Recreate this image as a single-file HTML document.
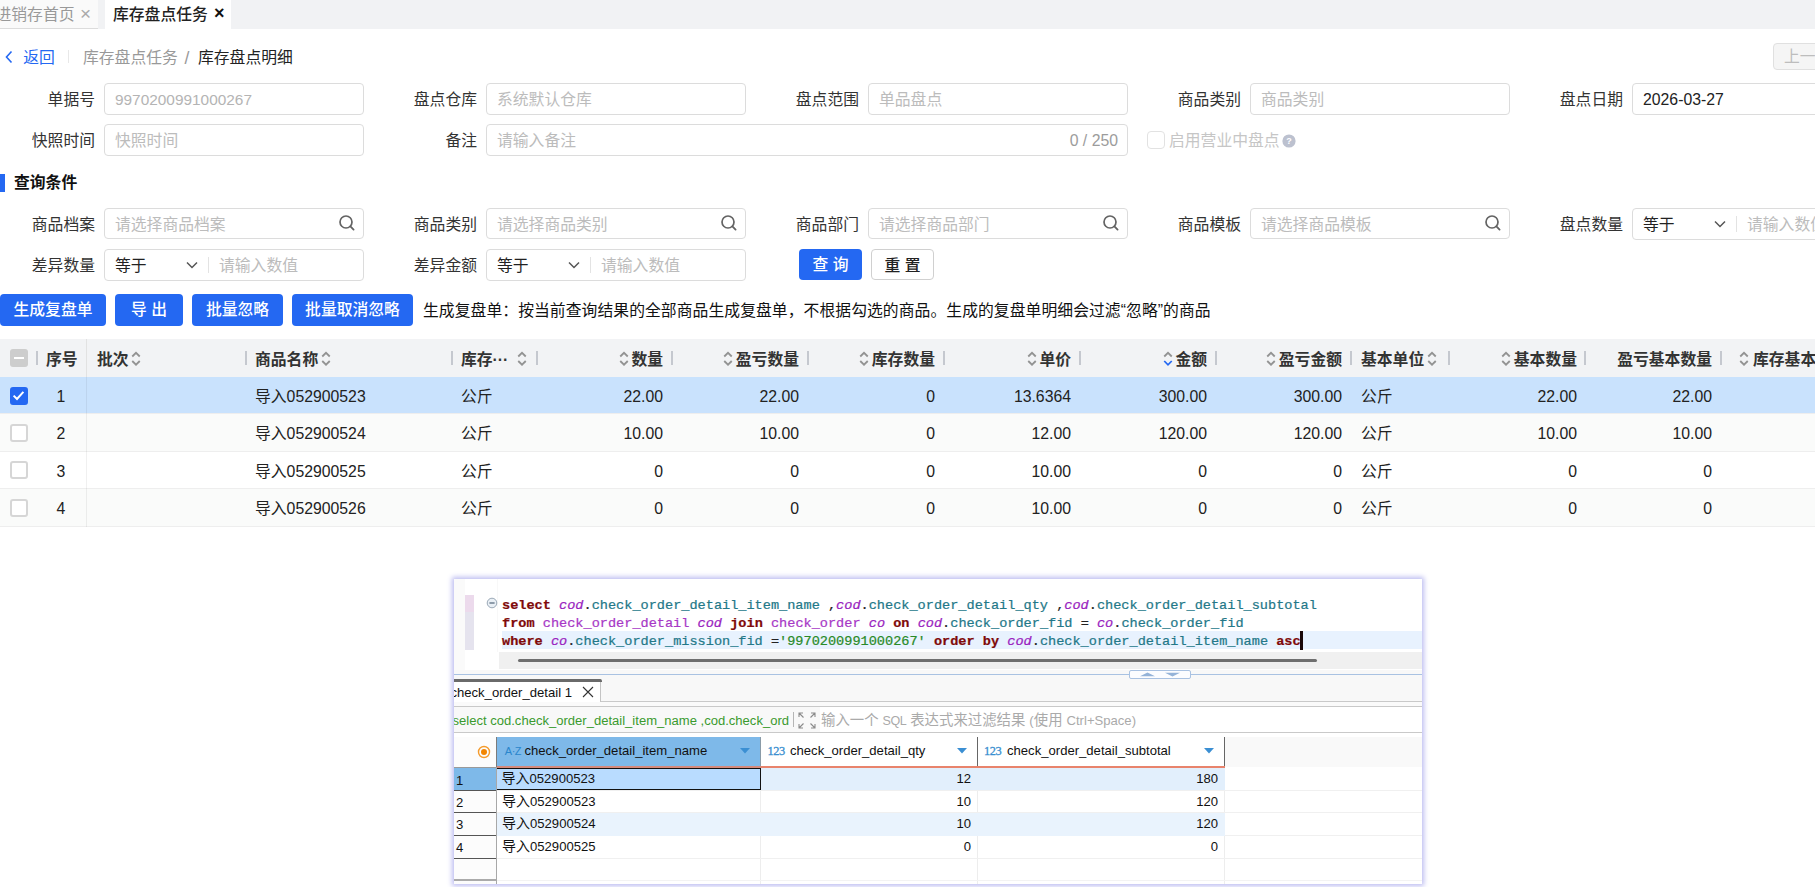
<!DOCTYPE html>
<html lang="zh-CN">
<head>
<meta charset="utf-8">
<title>库存盘点明细</title>
<style>
html,body{margin:0;padding:0;}
body{width:1815px;height:887px;overflow:hidden;background:#fff;position:relative;
  font-family:"Liberation Sans","Noto Sans CJK SC",sans-serif;font-size:15.8px;color:#333;}
*{box-sizing:border-box;}
.abs{position:absolute;}
/* ---------- tab bar ---------- */
#tabbar{position:absolute;left:0;top:0;width:1815px;height:29px;background:#f1f2f4;}
#tab1{position:absolute;left:0;top:0;width:98px;height:29px;background:#fafafa;border-bottom:1px solid #dcdcdc;color:#999;line-height:29px;white-space:nowrap;}
#tab2{position:absolute;left:105px;top:0;width:126px;height:29px;background:#fff;color:#222;line-height:29px;white-space:nowrap;font-weight:500;}
/* ---------- breadcrumb ---------- */
.bc{position:absolute;top:44.5px;height:26px;line-height:26px;white-space:nowrap;}
/* ---------- form ---------- */
.lbl{position:absolute;height:31px;line-height:34.6px;text-align:right;white-space:nowrap;color:#333;width:95px;}
.inp{position:absolute;height:31.5px;width:260px;border:1px solid #dcdcdc;border-radius:4px;background:#fff;line-height:32.6px;padding-left:10px;color:#bcbcbc;white-space:nowrap;overflow:hidden;}
.inp.val{color:#222;}
.inp.dis{color:#b4b4b4;font-size:15.4px;}
.num{font-size:15.8px;}
.sicon{position:absolute;right:7px;top:5px;width:18px;height:18px;}
.chev{position:absolute;width:12px;height:8px;}
.vdiv{position:absolute;width:1px;background:#e3e3e3;}
.btn{position:absolute;top:294px;height:32px;line-height:32px;border-radius:4px;background:#2468f2;color:#fff;text-align:center;white-space:nowrap;font-weight:500;}
/* ---------- table ---------- */
#thead{position:absolute;left:0;top:339px;width:1815px;height:38px;background:#f2f3f5;}
.th{position:absolute;top:0;height:38px;line-height:41.4px;font-weight:bold;color:#333;white-space:nowrap;}
.th.r{text-align:right;}
.tick{position:absolute;top:12px;width:2px;height:14px;background:#c5c8cf;margin-left:-0.5px;}
.sort{position:absolute;top:10.6px;width:10px;height:17.5px;margin-left:-1.7px;}
.row{position:absolute;left:0;width:1815px;height:37.4px;border-bottom:1px solid #eeeeee;}
.td{position:absolute;top:0;height:37px;line-height:40px;color:#222;white-space:nowrap;}
.td.r{text-align:right;}
.cb{position:absolute;left:9.5px;width:18px;height:18px;border:2px solid #d6d6d6;border-radius:3px;background:#fff;}

/* ---------- DBeaver panel ---------- */
#dbwrap{position:absolute;left:454px;top:579px;width:968px;height:305px;box-shadow:0 0 5px 2px #bdbdf1;background:#fff;}
#db{position:absolute;left:0;top:0;width:968px;height:305px;overflow:hidden;background:#fff;font-family:"Liberation Sans","Noto Sans CJK SC",sans-serif;font-size:13.1px;color:#111;}
.code{position:absolute;left:48px;height:18px;line-height:18px;white-space:pre;font-family:"Liberation Mono",monospace;font-size:13.58px;color:#222;-webkit-text-stroke:0.22px currentColor;}
.kw{font-weight:bold;color:#7f0a0a;}
.al{font-style:italic;color:#9a1fc0;}
.tb{color:#a738c6;}
.cl{color:#237888;}
.st{color:#288a28;}
.hl{position:absolute;height:1px;background:#c9c9c9;}
.gh{position:absolute;top:158px;height:29.5px;line-height:27.8px;white-space:nowrap;}
.gr{position:absolute;left:0;width:968px;height:22.56px;}
.gc{position:absolute;top:0;height:22.56px;line-height:21.2px;white-space:nowrap;}
.rh{position:absolute;left:0;width:42px;height:22.56px;line-height:23.6px;padding-left:2px;border-bottom:1px solid #555;background:#fcfcfc;}
.lt{font-size:13.1px;}
.cj{font-size:14px;}
.ico123{-webkit-text-stroke:0.3px #3a8fd0;color:#3a8fd0;font-size:12.4px;letter-spacing:-0.4px;font-family:"Liberation Serif",serif;line-height:28px !important;}
</style>
</head>
<body>
<!-- ================= TAB BAR ================= -->
<div id="tabbar">
  <div id="tab1"><span class="abs" style="left:-4.5px;top:0">进销存首页</span><span class="abs" style="left:80px;top:-1px;font-size:19px;color:#aaa">×</span></div>
  <div id="tab2"><span class="abs" style="left:8px;top:0">库存盘点任务</span><span class="abs" style="left:109px;top:-1px;font-size:18px;font-weight:bold;color:#111">×</span></div>
</div>

<!-- ================= BREADCRUMB ================= -->
<svg class="abs" style="left:4px;top:49px" width="10" height="16" viewBox="0 0 10 16"><path d="M7.5 2.5 L2.5 8 L7.5 13.5" fill="none" stroke="#2468f2" stroke-width="1.6"/></svg>
<div class="bc" style="left:23.2px;color:#2468f2">返回</div>
<div class="vdiv" style="left:68px;top:50px;height:13px;background:#e8e8e8"></div>
<div class="bc" style="left:83px;color:#999">库存盘点任务</div>
<div class="bc" style="left:184.5px;color:#999;font-size:17.5px">/</div>
<div class="bc" style="left:198px;color:#222">库存盘点明细</div>
<div class="abs" style="left:1773px;top:42.6px;width:60px;height:27px;border:1px solid #e0e0e0;border-radius:4px;background:#f5f5f5;color:#bdbdbd;line-height:25px;padding-left:10px;white-space:nowrap">上一条</div>

<!-- ================= FORM ROW 1 ================= -->
<div class="lbl" style="left:0;top:83px">单据号</div>
<div class="inp dis" style="left:104px;top:83px">9970200991000267</div>
<div class="lbl" style="left:382px;top:83px">盘点仓库</div>
<div class="inp" style="left:486px;top:83px">系统默认仓库</div>
<div class="lbl" style="left:764px;top:83px">盘点范围</div>
<div class="inp" style="left:868px;top:83px">单品盘点</div>
<div class="lbl" style="left:1146px;top:83px">商品类别</div>
<div class="inp" style="left:1250px;top:83px">商品类别</div>
<div class="lbl" style="left:1528px;top:83px">盘点日期</div>
<div class="inp val" style="left:1632px;top:83px">2026-03-27</div>

<!-- ================= FORM ROW 2 ================= -->
<div class="lbl" style="left:0;top:124px">快照时间</div>
<div class="inp" style="left:104px;top:124px">快照时间</div>
<div class="lbl" style="left:382px;top:124px">备注</div>
<div class="inp" style="left:486px;top:124px;width:642px">请输入备注<span class="abs" style="right:9px;top:0;color:#9c9c9c">0 / 250</span></div>
<div class="cb" style="left:1146.5px;top:131px;border:1px solid #e2e2e2;border-radius:4px"></div>
<div class="abs" style="left:1169px;top:124px;height:31px;line-height:33.6px;color:#c6c6c6;white-space:nowrap">启用营业中盘点</div>
<svg class="abs" style="left:1282px;top:133.6px" width="14" height="14" viewBox="0 0 14 14"><circle cx="7" cy="7" r="6.6" fill="#bcc1cf"/><text x="7" y="10.3" font-size="9" font-weight="bold" text-anchor="middle" fill="#fff" font-family="Liberation Sans, sans-serif">?</text></svg>

<!-- ================= SECTION TITLE ================= -->
<div class="abs" style="left:0;top:174px;width:5px;height:18px;background:#2468f2"></div>
<div class="abs" style="left:14px;top:170px;height:26px;line-height:26px;font-weight:bold;color:#111;white-space:nowrap">查询条件</div>

<!-- ================= QUERY ROW 1 ================= -->
<div class="lbl" style="left:0;top:208px">商品档案</div>
<div class="inp" style="left:104px;top:208px;height:30.8px">请选择商品档案<svg class="sicon" viewBox="0 0 18 18"><circle cx="8" cy="8" r="6" fill="none" stroke="#636363" stroke-width="1.7"/><path d="M12.4 12.4 L15.6 15.6" stroke="#636363" stroke-width="1.8" stroke-linecap="round"/></svg></div>
<div class="lbl" style="left:382px;top:208px">商品类别</div>
<div class="inp" style="left:486px;top:208px;height:30.8px">请选择商品类别<svg class="sicon" viewBox="0 0 18 18"><circle cx="8" cy="8" r="6" fill="none" stroke="#636363" stroke-width="1.7"/><path d="M12.4 12.4 L15.6 15.6" stroke="#636363" stroke-width="1.8" stroke-linecap="round"/></svg></div>
<div class="lbl" style="left:764px;top:208px">商品部门</div>
<div class="inp" style="left:868px;top:208px;height:30.8px">请选择商品部门<svg class="sicon" viewBox="0 0 18 18"><circle cx="8" cy="8" r="6" fill="none" stroke="#636363" stroke-width="1.7"/><path d="M12.4 12.4 L15.6 15.6" stroke="#636363" stroke-width="1.8" stroke-linecap="round"/></svg></div>
<div class="lbl" style="left:1146px;top:208px">商品模板</div>
<div class="inp" style="left:1250px;top:208px;height:30.8px">请选择商品模板<svg class="sicon" viewBox="0 0 18 18"><circle cx="8" cy="8" r="6" fill="none" stroke="#636363" stroke-width="1.7"/><path d="M12.4 12.4 L15.6 15.6" stroke="#636363" stroke-width="1.8" stroke-linecap="round"/></svg></div>
<div class="lbl" style="left:1528px;top:208px">盘点数量</div>
<div class="inp val" style="left:1632px;top:208px">等于<svg class="chev" style="left:81px;top:11px" viewBox="0 0 12 8"><path d="M1 1.5 L6 6.5 L11 1.5" fill="none" stroke="#555" stroke-width="1.5"/></svg><span class="vdiv" style="left:103px;top:7px;height:16px"></span><span class="abs" style="left:114px;top:0;color:#bcbcbc">请输入数值</span></div>

<!-- ================= QUERY ROW 2 ================= -->
<div class="lbl" style="left:0;top:249px">差异数量</div>
<div class="inp val" style="left:104px;top:249px;height:31.6px">等于<svg class="chev" style="left:81px;top:11px" viewBox="0 0 12 8"><path d="M1 1.5 L6 6.5 L11 1.5" fill="none" stroke="#555" stroke-width="1.5"/></svg><span class="vdiv" style="left:103px;top:7px;height:16px"></span><span class="abs" style="left:114px;top:0;color:#bcbcbc">请输入数值</span></div>
<div class="lbl" style="left:382px;top:249px">差异金额</div>
<div class="inp val" style="left:486px;top:249px;height:31.6px">等于<svg class="chev" style="left:81px;top:11px" viewBox="0 0 12 8"><path d="M1 1.5 L6 6.5 L11 1.5" fill="none" stroke="#555" stroke-width="1.5"/></svg><span class="vdiv" style="left:103px;top:7px;height:16px"></span><span class="abs" style="left:114px;top:0;color:#bcbcbc">请输入数值</span></div>
<div class="btn" style="left:799px;top:249px;width:63px;height:31px;line-height:32px">查 询</div>
<div class="abs" style="left:871px;top:249px;width:63px;height:31px;line-height:31px;border:1px solid #d0d0d0;border-radius:4px;text-align:center;color:#222;font-weight:500;white-space:nowrap;background:#fff">重 置</div>

<!-- ================= ACTION BUTTONS ================= -->
<div class="btn" style="left:0;width:106px">生成复盘单</div>
<div class="btn" style="left:115px;width:68px">导 出</div>
<div class="btn" style="left:192px;width:91px">批量忽略</div>
<div class="btn" style="left:292px;width:121px">批量取消忽略</div>
<div class="abs" style="left:423px;top:294px;height:32px;line-height:33px;color:#111;white-space:nowrap;letter-spacing:0.06px">生成复盘单：按当前查询结果的全部商品生成复盘单，不根据勾选的商品。生成的复盘单明细会过滤“忽略”的商品</div>

<!-- ================= TABLE ================= -->
<div id="thead">
<div class="abs" style="left:10px;top:10px;width:18px;height:18px;border-radius:3px;background:#cdcdcd"><div class="abs" style="left:4px;top:8px;width:10px;height:2px;background:#fff"></div></div>
<div class="tick" style="left:36px"></div>
<div class="th" style="left:46px">序号</div>
<div class="abs" style="left:86px;top:0;width:1px;height:187px;background:#e2e2e2"></div>
<div class="th" style="left:97px">批次</div><svg class="sort" style="left:132.5px" viewBox="0 0 8 14"><path d="M1 5.2 L4 2.2 L7 5.2 M1 8.8 L4 11.8 L7 8.8" fill="none" stroke="#939393" stroke-width="1.45"/></svg>
<div class="tick" style="left:245px"></div>
<div class="th" style="left:255px">商品名称</div><svg class="sort" style="left:322.5px" viewBox="0 0 8 14"><path d="M1 5.2 L4 2.2 L7 5.2 M1 8.8 L4 11.8 L7 8.8" fill="none" stroke="#939393" stroke-width="1.45"/></svg>
<div class="tick" style="left:451px"></div>
<div class="th" style="left:461px">库存···</div><svg class="sort" style="left:518.5px" viewBox="0 0 8 14"><path d="M1 5.2 L4 2.2 L7 5.2 M1 8.8 L4 11.8 L7 8.8" fill="none" stroke="#939393" stroke-width="1.45"/></svg>
<div class="tick" style="left:536px"></div>
<div class="th r" style="left:533px;width:130px">数量</div><svg class="sort" style="left:620.6px" viewBox="0 0 8 14"><path d="M1 5.2 L4 2.2 L7 5.2 M1 8.8 L4 11.8 L7 8.8" fill="none" stroke="#939393" stroke-width="1.45"/></svg>
<div class="tick" style="left:671px"></div>
<div class="th r" style="left:669px;width:130px">盈亏数量</div><svg class="sort" style="left:725.0px" viewBox="0 0 8 14"><path d="M1 5.2 L4 2.2 L7 5.2 M1 8.8 L4 11.8 L7 8.8" fill="none" stroke="#939393" stroke-width="1.45"/></svg>
<div class="tick" style="left:807px"></div>
<div class="th r" style="left:805px;width:130px">库存数量</div><svg class="sort" style="left:861.0px" viewBox="0 0 8 14"><path d="M1 5.2 L4 2.2 L7 5.2 M1 8.8 L4 11.8 L7 8.8" fill="none" stroke="#939393" stroke-width="1.45"/></svg>
<div class="tick" style="left:943px"></div>
<div class="th r" style="left:941px;width:130px">单价</div><svg class="sort" style="left:1028.6px" viewBox="0 0 8 14"><path d="M1 5.2 L4 2.2 L7 5.2 M1 8.8 L4 11.8 L7 8.8" fill="none" stroke="#939393" stroke-width="1.45"/></svg>
<div class="tick" style="left:1079px"></div>
<div class="th r" style="left:1077px;width:130px">金额</div><svg class="sort" style="left:1164.6px" viewBox="0 0 8 14"><path d="M1 5.2 L4 2.2 L7 5.2" fill="none" stroke="#939393" stroke-width="1.45"/><path d="M1 8.8 L4 11.8 L7 8.8" fill="none" stroke="#2468f2" stroke-width="1.4"/></svg>
<div class="tick" style="left:1215px"></div>
<div class="th r" style="left:1212px;width:130px">盈亏金额</div><svg class="sort" style="left:1268.0px" viewBox="0 0 8 14"><path d="M1 5.2 L4 2.2 L7 5.2 M1 8.8 L4 11.8 L7 8.8" fill="none" stroke="#939393" stroke-width="1.45"/></svg>
<div class="tick" style="left:1350px"></div>
<div class="th" style="left:1361px">基本单位</div><svg class="sort" style="left:1428.5px" viewBox="0 0 8 14"><path d="M1 5.2 L4 2.2 L7 5.2 M1 8.8 L4 11.8 L7 8.8" fill="none" stroke="#939393" stroke-width="1.45"/></svg>
<div class="tick" style="left:1448px"></div>
<div class="th r" style="left:1447px;width:130px">基本数量</div><svg class="sort" style="left:1503.0px" viewBox="0 0 8 14"><path d="M1 5.2 L4 2.2 L7 5.2 M1 8.8 L4 11.8 L7 8.8" fill="none" stroke="#939393" stroke-width="1.45"/></svg>
<div class="tick" style="left:1584px"></div>
<div class="th r" style="left:1582px;width:130px">盈亏基本数量</div>
<div class="tick" style="left:1720px"></div>
<div class="th" style="left:1753px">库存基本数量</div><svg class="sort" style="left:1741px" viewBox="0 0 8 14"><path d="M1 5.2 L4 2.2 L7 5.2 M1 8.8 L4 11.8 L7 8.8" fill="none" stroke="#939393" stroke-width="1.45"/></svg>
</div>
<div class="row" style="top:377px;background:#c9e2fd">
<div class="cb" style="top:9.5px;border-color:#2468f2;background:#2468f2"><svg class="abs" style="left:-0.5px;top:-0.5px" width="15" height="15" viewBox="0 0 15 15"><path d="M2.6 7.6 L6 11 L12.4 3.8" fill="none" stroke="#fff" stroke-width="2"/></svg></div>
<div class="td num" style="left:36px;width:50px;text-align:center">1</div>
<div class="abs" style="left:86px;top:0;width:1px;height:38px;background:rgba(0,0,0,0.06)"></div>
<div class="td" style="left:255px">导入052900523</div>
<div class="td" style="left:461px">公斤</div>
<div class="td r num" style="left:533px;width:130px">22.00</div>
<div class="td r num" style="left:669px;width:130px">22.00</div>
<div class="td r num" style="left:805px;width:130px">0</div>
<div class="td r num" style="left:941px;width:130px">13.6364</div>
<div class="td r num" style="left:1077px;width:130px">300.00</div>
<div class="td r num" style="left:1212px;width:130px">300.00</div>
<div class="td" style="left:1361px">公斤</div>
<div class="td r num" style="left:1447px;width:130px">22.00</div>
<div class="td r num" style="left:1582px;width:130px">22.00</div>
</div>
<div class="row" style="top:414.4px;background:#fafbfa">
<div class="cb" style="top:9.5px"></div>
<div class="td num" style="left:36px;width:50px;text-align:center">2</div>
<div class="abs" style="left:86px;top:0;width:1px;height:38px;background:rgba(0,0,0,0.06)"></div>
<div class="td" style="left:255px">导入052900524</div>
<div class="td" style="left:461px">公斤</div>
<div class="td r num" style="left:533px;width:130px">10.00</div>
<div class="td r num" style="left:669px;width:130px">10.00</div>
<div class="td r num" style="left:805px;width:130px">0</div>
<div class="td r num" style="left:941px;width:130px">12.00</div>
<div class="td r num" style="left:1077px;width:130px">120.00</div>
<div class="td r num" style="left:1212px;width:130px">120.00</div>
<div class="td" style="left:1361px">公斤</div>
<div class="td r num" style="left:1447px;width:130px">10.00</div>
<div class="td r num" style="left:1582px;width:130px">10.00</div>
</div>
<div class="row" style="top:451.8px;background:#ffffff">
<div class="cb" style="top:9.5px"></div>
<div class="td num" style="left:36px;width:50px;text-align:center">3</div>
<div class="abs" style="left:86px;top:0;width:1px;height:38px;background:rgba(0,0,0,0.06)"></div>
<div class="td" style="left:255px">导入052900525</div>
<div class="td" style="left:461px">公斤</div>
<div class="td r num" style="left:533px;width:130px">0</div>
<div class="td r num" style="left:669px;width:130px">0</div>
<div class="td r num" style="left:805px;width:130px">0</div>
<div class="td r num" style="left:941px;width:130px">10.00</div>
<div class="td r num" style="left:1077px;width:130px">0</div>
<div class="td r num" style="left:1212px;width:130px">0</div>
<div class="td" style="left:1361px">公斤</div>
<div class="td r num" style="left:1447px;width:130px">0</div>
<div class="td r num" style="left:1582px;width:130px">0</div>
</div>
<div class="row" style="top:489.2px;background:#fafbfa">
<div class="cb" style="top:9.5px"></div>
<div class="td num" style="left:36px;width:50px;text-align:center">4</div>
<div class="abs" style="left:86px;top:0;width:1px;height:38px;background:rgba(0,0,0,0.06)"></div>
<div class="td" style="left:255px">导入052900526</div>
<div class="td" style="left:461px">公斤</div>
<div class="td r num" style="left:533px;width:130px">0</div>
<div class="td r num" style="left:669px;width:130px">0</div>
<div class="td r num" style="left:805px;width:130px">0</div>
<div class="td r num" style="left:941px;width:130px">10.00</div>
<div class="td r num" style="left:1077px;width:130px">0</div>
<div class="td r num" style="left:1212px;width:130px">0</div>
<div class="td" style="left:1361px">公斤</div>
<div class="td r num" style="left:1447px;width:130px">0</div>
<div class="td r num" style="left:1582px;width:130px">0</div>
</div>

<!-- ================= DBEAVER PANEL ================= -->
<div id="dbwrap"><div id="db">
  <!-- editor gutter -->
  <div class="abs" style="left:0;top:0;width:11px;height:91px;background:#fafafa"></div>
  <div class="abs" style="left:11px;top:16px;width:9px;height:17.5px;background:#ecdaec"></div>
  <div class="abs" style="left:11px;top:33px;width:9px;height:38px;background:#e5e3ee"></div>
  <div class="abs" style="left:43px;top:0;width:1px;height:73px;background:#f8f8f8"></div>
  <svg class="abs" style="left:32px;top:18px" width="12" height="12" viewBox="0 0 12 12"><circle cx="6" cy="6" r="4.8" fill="#e9eff5" stroke="#9aa8b6" stroke-width="1"/><path d="M3.4 6 H8.6" stroke="#66788a" stroke-width="1.4"/></svg>
  <!-- current line -->
  <div class="abs" style="left:48px;top:52px;width:920px;height:18px;background:#e8f2fe"></div>
  <div class="code" style="top:17.5px"><span class="kw">select</span> <span class="al">cod</span>.<span class="cl">check_order_detail_item_name</span> ,<span class="al">cod</span>.<span class="cl">check_order_detail_qty</span> ,<span class="al">cod</span>.<span class="cl">check_order_detail_subtotal</span></div>
  <div class="code" style="top:35.5px"><span class="kw">from</span> <span class="tb">check_order_detail</span> <span class="al">cod</span> <span class="kw">join</span> <span class="tb">check_order</span> <span class="al">co</span> <span class="kw">on</span> <span class="al">cod</span>.<span class="cl">check_order_fid</span> = <span class="al">co</span>.<span class="cl">check_order_fid</span></div>
  <div class="code" style="top:53.5px"><span class="kw">where</span> <span class="al">co</span>.<span class="cl">check_order_mission_fid</span> =<span class="st">'9970200991000267'</span> <span class="kw">order</span> <span class="kw">by</span> <span class="al">cod</span>.<span class="cl">check_order_detail_item_name</span> <span class="kw">asc</span></div>
  <div class="abs" style="left:846px;top:52px;width:2.5px;height:18.5px;background:#1a0808"></div>
  <!-- h scrollbar -->
  <div class="abs" style="left:45px;top:73.3px;width:923px;height:17.2px;background:#f0f0f0"></div>
  <div class="abs" style="left:64px;top:80px;width:799px;height:2.6px;border-radius:2px;background:#6f6f6f"></div>
  <!-- sash -->
  <div class="abs" style="left:0;top:90.5px;width:968px;height:215px;background:#f8f8f8"></div>
  <div class="abs" style="left:0;top:95px;width:968px;height:1px;background:#a9c2e2"></div>
  <div class="abs" style="left:675px;top:91px;width:62px;height:9px;border:1px solid #a9c2e2;border-radius:2px;background:#fcfdff"></div>
  <svg class="abs" style="left:675px;top:91px" width="62" height="9" viewBox="0 0 62 9"><path d="M11 6.2 L18.5 2.6 L26 6.2 Z M36 2.8 L51 2.8 L43.5 6.4 Z" fill="#94b3d8"/></svg>
  <!-- result tab -->
  <div class="abs" style="left:0;top:100px;width:147px;height:27px;background:#fff;border-right:1px solid #c4c4c4"></div>
  <div class="abs" style="left:0;top:100px;width:147.5px;height:3px;background:#6a6a6a;border-radius:0 2px 0 0"></div>
  <div class="abs" id="tabtxt" style="left:-3.6px;top:103.5px;height:20px;line-height:20px;white-space:nowrap;font-size:13.1px;color:#111">check_order_detail 1</div>
  <svg class="abs" style="left:128px;top:106.5px" width="12" height="12" viewBox="0 0 12 12"><path d="M1 1 L11 11 M11 1 L1 11" stroke="#333" stroke-width="1.1"/></svg>
  <div class="hl" style="left:147px;top:122px;width:821px"></div>
  <div class="abs" style="left:0;top:123px;width:968px;height:4px;background:#fafafa"></div>
  <div class="hl" style="left:0;top:127px;width:968px"></div>
  <!-- filter row -->
  <div class="abs" style="left:0;top:128px;width:968px;height:25px;background:#fff"></div>
  <div class="abs" style="left:0;top:128px;width:366px;height:25px;background:#f8f8f8"></div>
  <div class="abs" id="fsql" style="left:-1.5px;top:131px;height:22px;line-height:22px;white-space:nowrap;color:#3a9a2e;font-size:13.06px">select cod.check_order_detail_item_name ,cod.check_ord</div>
  <div class="abs" style="left:339px;top:133px;width:1px;height:15px;background:#b5b5b5"></div>
  <svg class="abs" style="left:343.5px;top:133px" width="18" height="17" viewBox="0 0 18 17"><g fill="none" stroke="#8a8a8a" stroke-width="1.1"><path d="M1 5 V1 H5 M1 1 L5.5 5.5"/><path d="M13 1 H17 V5 M17 1 L12.5 5.5"/><path d="M1 12 V16 H5 M1 16 L5.5 11.5"/><path d="M13 16 H17 V12 M17 16 L12.5 11.5"/></g></svg>
  <div class="abs" id="fph" style="left:367px;top:130.2px;height:22px;line-height:22px;white-space:nowrap;color:#aaa;font-size:14.4px">输入一个 <span class="lt" style="font-size:12.5px;letter-spacing:-0.45px">SQL</span> 表达式来过滤结果 <span class="lt">(</span>使用 <span class="lt">Ctrl+Space)</span></div>
  <div class="hl" style="left:0;top:153px;width:968px"></div>
  <!-- grid -->
  <div class="abs" style="left:0;top:154px;width:968px;height:151px;background:#fff"></div>
  <div class="abs" style="left:770px;top:158px;width:198px;height:30px;background:#f9f9f9"></div>
  <div class="abs" style="left:0;top:158px;width:42px;height:147px;background:#fcfcfc"></div>
  <svg class="abs" style="left:23.1px;top:166.4px" width="14" height="14" viewBox="0 0 14 14"><circle cx="7" cy="7" r="5.5" fill="none" stroke="#f59b2c" stroke-width="1.4"/><circle cx="7" cy="7" r="3" fill="#f28500"/></svg>
  <div class="gh" style="left:42px;width:265px;background:#7eb9e9;border-left:1px solid #6aa6d8;border-right:1px solid #8a9ba8"></div>
  <div class="gh" style="left:50.8px;color:#2a86cc;font-size:11px;letter-spacing:-0.5px;line-height:28.4px">A·Z</div>
  <div class="gh" id="gh1" style="left:70.5px">check_order_detail_item_name</div>
  <svg class="abs" style="left:286px;top:169px" width="10" height="6" viewBox="0 0 10 6"><path d="M0 0 H10 L5 5.5 Z" fill="#3b8fd3"/></svg>
  <div class="abs" style="left:523px;top:158px;width:1px;height:30px;background:#666"></div>
  <div class="abs" style="left:770px;top:158px;width:1px;height:30px;background:#666"></div>
  <div class="gh ico123" style="left:313.5px">123</div>
  <div class="gh" id="gh2" style="left:336px">check_order_detail_qty</div>
  <svg class="abs" style="left:503px;top:169px" width="10" height="6" viewBox="0 0 10 6"><path d="M0 0 H10 L5 5.5 Z" fill="#3b8fd3"/></svg>
  <div class="gh ico123" style="left:530px">123</div>
  <div class="gh" id="gh3" style="left:553px">check_order_detail_subtotal</div>
  <svg class="abs" style="left:750px;top:169px" width="10" height="6" viewBox="0 0 10 6"><path d="M0 0 H10 L5 5.5 Z" fill="#3b8fd3"/></svg>
  <div class="abs" style="left:42px;top:187px;width:729px;height:2px;background:#e8836c"></div>
  <div class="abs" style="left:42px;top:187px;width:265px;height:2px;background:#d48a7c"></div>
  <!-- vertical grid lines -->
  <div class="abs" style="left:306px;top:189px;width:1px;height:116px;background:#ededed"></div>
  <div class="abs" style="left:523px;top:189px;width:1px;height:116px;background:#ededed"></div>
  <div class="abs" style="left:770px;top:189px;width:1px;height:116px;background:#ededed"></div>
  <!-- rows -->
  <div class="gr" style="top:189.3px;border-bottom:1px solid #f0f0f0"><div class="abs" style="left:307px;top:0;width:464px;height:22px;background:#e2effc"></div><div class="rh" style="background:#7eb9e9;line-height:25px">1</div><div class="gc" style="left:42px;width:265px;height:22px;background:#b9dcff;border:1.5px solid #111;padding-left:4.5px;line-height:19.5px"><span class="cj">导入</span>052900523</div><div class="gc" style="left:307px;width:210px;text-align:right;line-height:22.5px">12</div><div class="gc" style="left:524px;width:240px;text-align:right;line-height:22.5px">180</div></div>
  <div class="gr" style="top:211.9px;border-bottom:1px solid #f0f0f0"><div class="rh">2</div><div class="gc" style="left:48px"><span class="cj">导入</span>052900523</div><div class="gc" style="left:307px;width:210px;text-align:right">10</div><div class="gc" style="left:524px;width:240px;text-align:right">120</div></div>
  <div class="gr" style="top:234.4px;border-bottom:1px solid #f0f0f0"><div class="abs" style="left:43px;top:0;width:728px;height:22.5px;background:#e9f3fd"></div><div class="rh">3</div><div class="gc" style="left:48px"><span class="cj">导入</span>052900524</div><div class="gc" style="left:307px;width:210px;text-align:right">10</div><div class="gc" style="left:524px;width:240px;text-align:right">120</div></div>
  <div class="gr" style="top:257px;border-bottom:1px solid #f0f0f0"><div class="rh">4</div><div class="gc" style="left:48px"><span class="cj">导入</span>052900525</div><div class="gc" style="left:307px;width:210px;text-align:right">0</div><div class="gc" style="left:524px;width:240px;text-align:right">0</div></div>
  <div class="gr" style="top:279.6px;border-bottom:1px solid #f3f3f3"><div class="rh" style="border-bottom:2px solid #aaa"></div></div>
  <div class="abs" style="left:41.5px;top:158px;width:1.5px;height:147px;background:#a8a8a8"></div>
  <div class="abs" style="left:41.5px;top:158px;width:1.5px;height:30px;background:#7c7c7c"></div>
  <div class="abs" style="left:0;top:188px;width:42px;height:1px;background:#9a9a9a"></div>
</div></div>

</body>
</html>
